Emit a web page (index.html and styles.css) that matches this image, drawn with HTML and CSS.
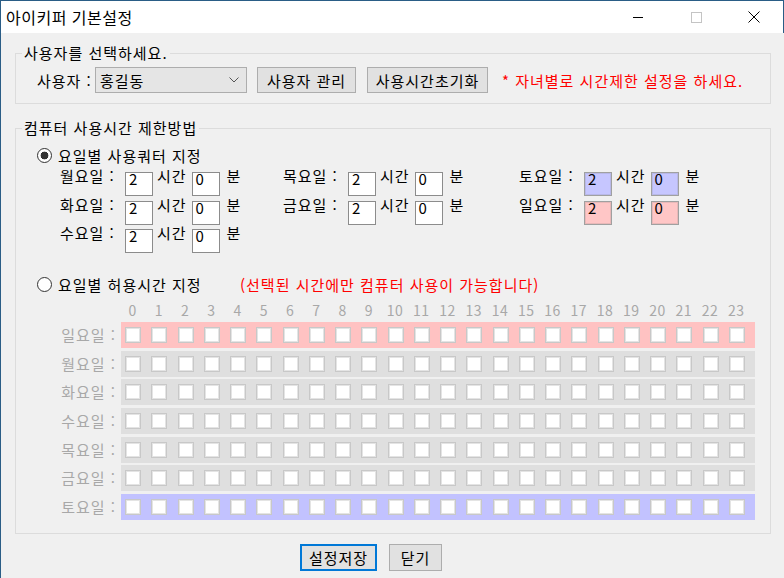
FILE: index.html
```html
<!DOCTYPE html>
<html lang="ko">
<head>
<meta charset="utf-8">
<title>아이키퍼 기본설정</title>
<link rel="stylesheet" href="styles.css">
</head>
<body>
<div class="window">
  <div class="titlebar">
    <span class="title">아이키퍼 기본설정</span>
    <div class="caption">
      <span class="cap-btn"><svg width="12" height="12" viewBox="0 0 12 12"><path d="M1 6.5H11" stroke="#000" stroke-width="1"/></svg></span>
      <span class="cap-btn"><svg width="12" height="12" viewBox="0 0 12 12"><rect x="1.5" y="1.5" width="10" height="10" fill="none" stroke="#c4c4c4" stroke-width="1"/></svg></span>
      <span class="cap-btn"><svg width="12" height="12" viewBox="0 0 12 12"><path d="M0.5 0.5L11.5 11.5M11.5 0.5L0.5 11.5" stroke="#000" stroke-width="1"/></svg></span>
    </div>
  </div>
  <div class="client">
    <fieldset class="group g-user">
      <legend>사용자를 선택하세요.</legend>
      <div class="group-body user-body">
        <div class="user-row">
          <span class="lbl-user">사용자 :</span>
          <div class="combo"><span>홍길동</span><svg width="10" height="6" viewBox="0 0 10 6"><path d="M0.5 0.5L5 5L9.5 0.5" fill="none" stroke="#555" stroke-width="1"/></svg></div>
          <span class="btn btn-manage">사용자 관리</span>
          <span class="btn btn-reset">사용시간초기화</span>
          <span class="note">* 자녀별로 시간제한 설정을 하세요.</span>
        </div>
      </div>
    </fieldset>

    <fieldset class="group g-limit">
      <legend>컴퓨터 사용시간 제한방법</legend>
      <div class="group-body limit-body">
        <div class="radio-row">
          <span class="radio checked"></span><span class="radio-lbl">요일별 사용쿼터 지정</span>
        </div>
        <div class="quota">
          <div class="q"><span class="q-lbl">월요일 :</span><span class="edit">2</span><span class="q-u1">시간</span><span class="edit">0</span><span class="q-u2">분</span></div>
          <div class="q"><span class="q-lbl">목요일 :</span><span class="edit">2</span><span class="q-u1">시간</span><span class="edit">0</span><span class="q-u2">분</span></div>
          <div class="q"><span class="q-lbl">토요일 :</span><span class="edit sat">2</span><span class="q-u1">시간</span><span class="edit sat">0</span><span class="q-u2">분</span></div>
          <div class="q"><span class="q-lbl">화요일 :</span><span class="edit">2</span><span class="q-u1">시간</span><span class="edit">0</span><span class="q-u2">분</span></div>
          <div class="q"><span class="q-lbl">금요일 :</span><span class="edit">2</span><span class="q-u1">시간</span><span class="edit">0</span><span class="q-u2">분</span></div>
          <div class="q"><span class="q-lbl">일요일 :</span><span class="edit sun">2</span><span class="q-u1">시간</span><span class="edit sun">0</span><span class="q-u2">분</span></div>
          <div class="q"><span class="q-lbl">수요일 :</span><span class="edit">2</span><span class="q-u1">시간</span><span class="edit">0</span><span class="q-u2">분</span></div>
        </div>
        <div class="radio-row r2">
          <span class="radio"></span><span class="radio-lbl wide">요일별 허용시간 지정</span><span class="hint">(선택된 시간에만 컴퓨터 사용이 가능합니다)</span>
        </div>
        <div class="hours">
          <span class="spacer"></span>
          <div class="hour-nums">
            <span>0</span><span>1</span><span>2</span><span>3</span><span>4</span><span>5</span><span>6</span><span>7</span><span>8</span><span>9</span><span>10</span><span>11</span><span>12</span><span>13</span><span>14</span><span>15</span><span>16</span><span>17</span><span>18</span><span>19</span><span>20</span><span>21</span><span>22</span><span>23</span>
          </div>
        </div>
        <div class="days" id="days"></div>
      </div>
    </fieldset>

    <div class="actions">
      <span class="btn btn-save">설정저장</span>
      <span class="btn btn-close">닫기</span>
    </div>
  </div>
</div>
<script src="app.js"></script>
</body>
</html>
```

FILE: app.js
```js
(function () {
  var days = [
    ["일요일 :", "sun"], ["월요일 :", ""], ["화요일 :", ""], ["수요일 :", ""],
    ["목요일 :", ""], ["금요일 :", ""], ["토요일 :", "sat"]
  ];
  var host = document.getElementById("days");
  days.forEach(function (d) {
    var row = document.createElement("div");
    row.className = "day-row";
    var lbl = document.createElement("span");
    lbl.className = "day-lbl";
    lbl.textContent = d[0];
    row.appendChild(lbl);
    var slots = document.createElement("div");
    slots.className = "slots" + (d[1] ? " " + d[1] : "");
    for (var i = 0; i < 24; i++) {
      var cb = document.createElement("span");
      cb.className = "cb";
      slots.appendChild(cb);
    }
    row.appendChild(slots);
    host.appendChild(row);
  });
})();
```

FILE: styles.css
```css
* { box-sizing: border-box; }
html, body { margin: 0; padding: 0; }
body {
  width: 784px; height: 578px; overflow: hidden;
  background: #f0f0f0;
  font-family: "Noto Sans CJK KR", "Noto Sans", sans-serif;
  font-size: 15px; color: #000;
  letter-spacing: 1px;
}
.window {
  width: 784px; height: 578px;
  border-left: 1px solid #2a5d86;
  border-top: 1px solid #2a5d86;
  display: flex; flex-direction: column;
  background: #f0f0f0;
}
.titlebar {
  height: 32px; flex: none;
  background: #fff;
  display: flex; align-items: center;
  border-right: 1px solid #2a5d86;
}
.title { flex: 1; padding-left: 5px; font-size: 16px; letter-spacing: 0.5px; line-height: 20px; }
.caption { display: flex; height: 32px; }
.cap-btn { width: 58px; display: flex; align-items: center; justify-content: center; }

.client { flex: 1; display: flex; flex-direction: column; }

fieldset.group {
  margin: 0 13px 0 14px;
  padding: 0;
  border: 1px solid #dcdcdc;
  min-width: 0;
}
fieldset.group legend {
  margin-left: 6px;
  padding: 0 2px;
  line-height: 20px;
}
fieldset.g-user { margin-top: 10px; }
fieldset.g-limit { margin-top: 14px; }
.user-body { padding: 4px 0 10px 21px; }
.limit-body { padding: 7px 0 13px 20px; }

.user-row { display: flex; align-items: center; height: 26px; }
.lbl-user { width: 58px; }
.combo {
  width: 152px; height: 26px;
  background: #e5e5e5; border: 1px solid #adadad;
  display: flex; align-items: center; justify-content: space-between;
  padding: 0 7px 0 4px;
}
.btn {
  display: inline-flex; align-items: center; justify-content: center;
  height: 26px;
  background: #e1e1e1; border: 1px solid #adadad;
}
.btn-manage { width: 99px; margin-left: 10px; }
.btn-reset { width: 121px; margin-left: 11px; }
.note { margin-left: 14px; color: #ff0000; }

.radio-row { display: flex; align-items: center; height: 20px; }
.radio {
  width: 15px; height: 15px; border-radius: 50%;
  border: 1px solid #333; background: #fff;
  margin-left: 1px; margin-right: 6px;
}
.radio.checked { background: radial-gradient(circle, #333 0 3.6px, #fff 4.2px); }
.radio-lbl.wide { width: 182px; }
.hint { color: #ff0000; }

.quota {
  margin: 7px 0 0 24px;
  display: grid;
  grid-template-columns: 223px 236px auto;
  grid-auto-rows: 24px;
  row-gap: 4.5px;
}
.q { display: flex; align-items: flex-start; line-height: 16px; }
.q > span:not(.edit) { margin-top: -4px; }
.q-lbl { width: 65px; }
.q-u1 { margin: 0 5px 0 4px; }
.q-u2 { margin-left: 7px; }
.edit {
  width: 28px; height: 24px;
  background: #fff; border: 1px solid #8c8c8c;
  padding-left: 3px; line-height: 12px;
}
.edit.sat { background: #c6c6ff; border-color: #a0a0a0; box-shadow: inset 0 0 0 1px #b8b8e8; }
.edit.sun { background: #ffc6c6; border-color: #a0a0a0; box-shadow: inset 0 0 0 1px #e8b8b8; }

.r2 { margin-top: 21.5px; }

.hours { display: flex; margin-top: 5.5px; height: 20px; }
.spacer { width: 85px; flex: none; }
.hour-nums { display: grid; grid-template-columns: repeat(24, 26.26px); }
.hour-nums span {
  text-align: center; padding-right: 3px;
  color: #a8a8a8; font-size: 14px; line-height: 20px; letter-spacing: 0.5px;
}

.days { margin-top: 2px; display: flex; flex-direction: column; gap: 2.67px; }
.day-row { display: flex; height: 26px; }
.day-lbl {
  width: 85px; flex: none; text-align: right; padding-right: 5px;
  color: #a8a8a8; line-height: 26px;
}
.slots {
  width: 634px; flex: none;
  display: grid; grid-template-columns: repeat(24, 26.26px);
  align-items: center;
  background: #dfdfdf;
}
.slots.sun { background: #ffc2c2; }
.slots.sat { background: #c2c2ff; }
.cb {
  width: 16px; height: 16px; margin-left: 4px;
  background: #fff; border: 1px solid #c8c8c8;
  box-shadow: inset 0 0 0 1px #e4e4e4;
}

.actions { display: flex; margin-top: 10px; padding-left: 299px; }
.btn-save { width: 77px; height: 27px; border: 2px solid #0078d7; }
.btn-close { width: 53px; height: 27px; margin-left: 12px; }
```
